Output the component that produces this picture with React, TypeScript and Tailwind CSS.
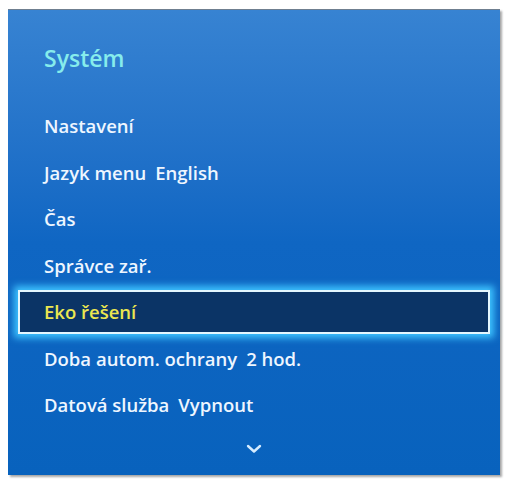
const items = [
  { label: 'Nastavení' },
  { label: 'Jazyk menu', value: 'English' },
  { label: 'Čas' },
  { label: 'Správce zař.' },
  { label: 'Eko řešení', active: true },
  { label: 'Doba autom. ochrany', value: '2 hod.' },
  { label: 'Datová služba', value: 'Vypnout' },
]

function ChevronDown() {
  return (
    <svg width="16" height="10" viewBox="0 0 16 10" fill="none">
      <path d="M2 2 L8 7.5 L14 2" stroke="#d6ecff" strokeWidth="2.4" strokeLinecap="round" strokeLinejoin="round" />
    </svg>
  )
}

export default function App() {
  return (
    <div className="w-[507px] h-[479px] bg-white pt-[9px] pl-[8px]" style={{ fontFamily: '"Open Sans", "Noto Sans", sans-serif' }}>
      <div className="w-[492px] h-[466px] flex flex-col border-t border-[#6f7f90] bg-gradient-to-b from-[#3783d2] via-[#0f66c3] to-[#0862bd] shadow-[2px_2px_2px_rgba(0,0,0,0.35)]">
        {/* Title */}
        <div className="pt-[33px] pl-[36px] h-[64px] text-[23px] leading-[30px] font-semibold text-[#86ecec]">
          Systém
        </div>

        {/* Menu */}
        <div className="mt-[29px] flex flex-col">
          {items.map((item) => (
            <div key={item.label} className="h-[46.5px] flex items-center">
              {item.active ? (
                <div className="mx-[10px] flex-1 h-[44px] flex items-center pl-[24px] bg-[#0b3466] border-2 border-[#e4f7ff] shadow-[0_0_7px_4px_#3ec4ff] text-[18.5px] font-semibold text-[#ece650]">
                  {item.label}
                </div>
              ) : (
                <div className="pl-[36px] flex gap-[9px] text-[18.5px] font-semibold text-[#eef6ff]">
                  <span>{item.label}</span>
                  {item.value && <span>{item.value}</span>}
                </div>
              )}
            </div>
          ))}
        </div>

        {/* Scroll indicator */}
        <div className="flex justify-center pt-[15px]">
          <ChevronDown />
        </div>
      </div>
    </div>
  )
}
